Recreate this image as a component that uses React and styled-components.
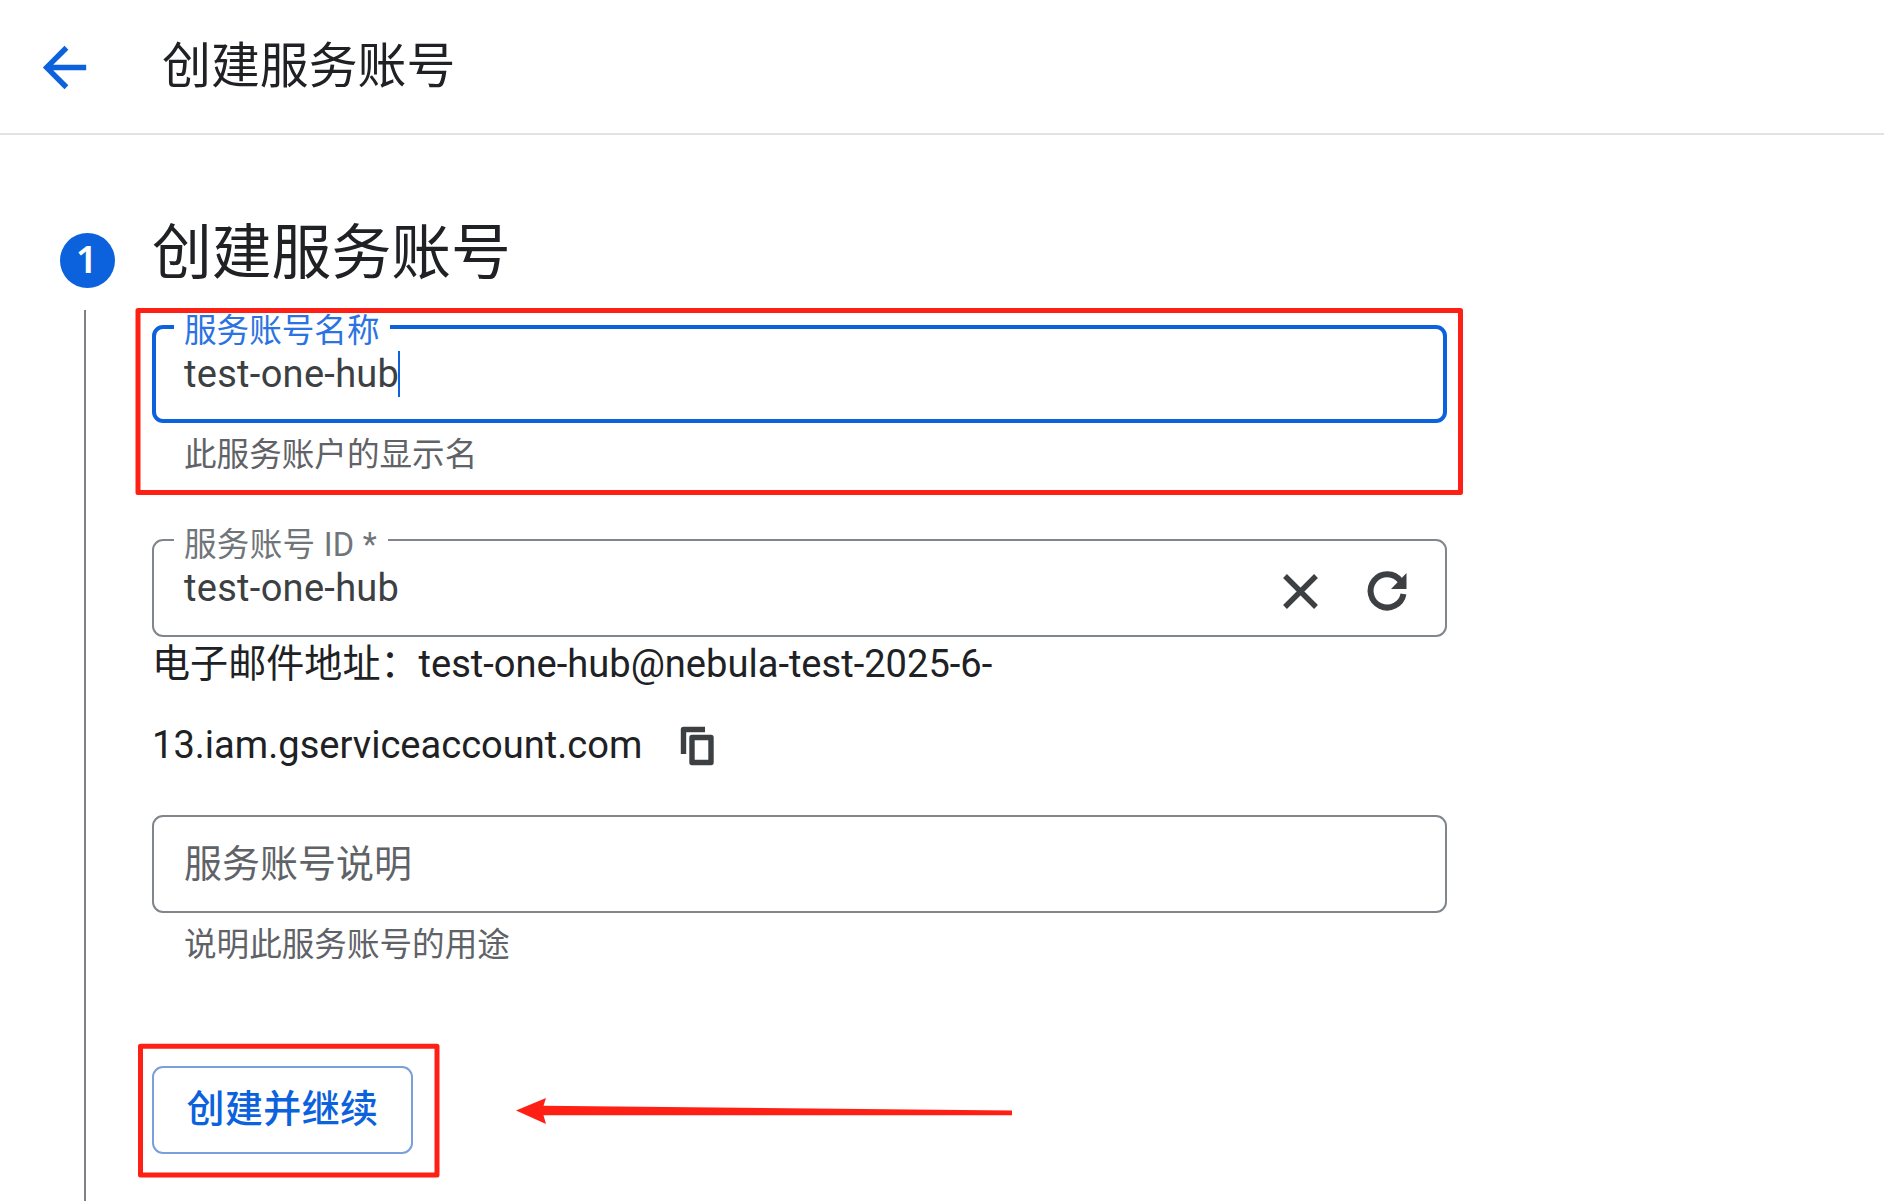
// src/App.jsx
import React, { useState } from 'react';
import styled, { createGlobalStyle } from 'styled-components';

const GlobalStyle = createGlobalStyle`
  * {
    box-sizing: border-box;
  }

  body {
    margin: 0;
    background: #fff;
    color: #202124;
    font-family: Roboto, "Noto Sans CJK SC", sans-serif;
    overflow: hidden;
  }
`;

const Page = styled.div`
  position: relative;
  display: flex;
  flex-direction: column;
  width: 1884px;
  height: 1201px;
  overflow: hidden;
  background: #fff;
`;

const Header = styled.header`
  display: flex;
  align-items: center;
  flex: none;
  height: 135px;
  padding-left: 32px;
  border-bottom: 2px solid #dfe3e3;
`;

const BackButton = styled.button`
  display: flex;
  padding: 0;
  margin-top: 2px;
  border: none;
  background: none;
  color: #0b62dc;
  cursor: pointer;
`;

const PageTitle = styled.h1`
  margin: 0 0 0 65px;
  font-size: 48.9px;
  font-weight: 400;
  line-height: 64px;
`;

const Stepper = styled.main`
  display: flex;
  flex: 1;
  min-height: 0;
  padding-left: 60px;
`;

const Rail = styled.div`
  display: flex;
  flex-direction: column;
  align-items: center;
  flex: none;
  width: 55px;
  margin-right: 37px;
  padding-top: 98px;
`;

const StepNumber = styled.div`
  flex: none;
  width: 55px;
  height: 55px;
  padding-right: 2px;
  border-radius: 50%;
  background: #0b62dc;
  color: #fff;
  font-family: "Noto Sans", sans-serif;
  font-size: 38px;
  font-weight: 600;
  line-height: 51px;
  text-align: center;
`;

const StepLine = styled.div`
  flex: 1;
  width: 2px;
  margin: 22px 5px 0 0;
  background: #808186;
`;

const StepContent = styled.section`
  width: 1295px;
  padding-top: 81px;
`;

const StepTitle = styled.h2`
  margin: 0;
  height: 109px;
  font-size: 59.8px;
  font-weight: 400;
  line-height: 76px;
`;

const Field = styled.div`
  position: relative;
  display: flex;
  align-items: center;
  justify-content: space-between;
  height: 98px;
  padding: 0 ${(p) => (p.$focused ? '28px' : '30px')};
  border: ${(p) => (p.$focused ? '4px solid #0b62dc' : '2px solid #80868b')};
  border-radius: 11px;
`;

const FloatingLabel = styled.label`
  position: absolute;
  top: ${(p) => (p.$focused ? '-18px' : '-16px')};
  left: ${(p) => (p.$focused ? '18px' : '20px')};
  padding: 0 11px 0 10px;
  background: #fff;
  color: ${(p) => (p.$focused ? '#2b73e2' : '#70757a')};
  font-size: 32.6px;
  line-height: 40px;
  letter-spacing: ${(p) => (p.$focused ? '0' : '0.25px')};
  white-space: pre;
`;

const Value = styled.span`
  display: flex;
  align-items: center;
  color: #3c4043;
  font-size: 38px;
  line-height: 46px;
  letter-spacing: 0.3px;
`;

const Caret = styled.span`
  width: 2px;
  height: 46px;
  margin-left: -1px;
  background: #0b62dc;
`;

const Placeholder = styled.span`
  color: #5f6368;
  font-size: 38px;
  line-height: 46px;
`;

const Hint = styled.p`
  margin: 0;
  padding-left: 32px;
  height: ${(p) => p.$height}px;
  padding-top: 10px;
  color: #5f6368;
  font-size: 32.6px;
  line-height: 44px;
`;

const FieldActions = styled.div`
  display: flex;
  gap: 38px;
  margin-top: 6px;
  margin-right: 3px;
`;

const IconButton = styled.button`
  display: flex;
  padding: 0;
  border: none;
  background: none;
  color: #3c4043;
  cursor: pointer;
`;

const Email = styled.div`
  display: flex;
  flex-direction: column;
  width: 900px;
  height: 178px;
  font-size: 38.1px;
  line-height: 81px;
`;

const EmailLine = styled.div`
  display: flex;
  align-items: center;
  gap: 31px;
  height: 81px;
  margin-top: ${(p) => (p.$first ? '-13px' : '0')};
`;

const SubmitButton = styled.button`
  display: block;
  width: 261px;
  height: 88px;
  padding: 0 0 9px;
  border: 2px solid #7b9fdc;
  border-radius: 11px;
  background: #fff;
  color: #0b62dc;
  font-family: inherit;
  font-size: 38px;
  font-weight: 500;
  letter-spacing: 0.4px;
  cursor: pointer;
`;

const Marks = styled.svg`
  position: absolute;
  top: 0;
  left: 0;
  pointer-events: none;
`;

const BackIcon = () => (
  <svg width="65" height="65" viewBox="0 0 24 24" fill="currentColor">
    <path d="M20 11H7.83l5.59-5.59L12 4l-8 8 8 8 1.41-1.41L7.83 13H20v-2z" />
  </svg>
);

const ClearIcon = () => (
  <svg width="49" height="49" viewBox="0 0 49 49" fill="none" stroke="currentColor" strokeWidth="5.4">
    <path d="M9 9L40 40M40 9L9 40" />
  </svg>
);

const RefreshIcon = () => (
  <svg width="49" height="49" viewBox="0 0 49 49">
    <path d="M37.5 14A16.6 16.6 0 1 0 40.5 27" fill="none" stroke="currentColor" strokeWidth="6" />
    <path d="M43.5 6V22H28z" fill="currentColor" />
  </svg>
);

const CopyIcon = () => (
  <svg width="49" height="49" viewBox="0 0 49 49" fill="none" stroke="currentColor" strokeLinejoin="round">
    <path d="M10.5 33V8.5H32" strokeWidth="5.4" />
    <rect x="19" y="16.5" width="19" height="25" strokeWidth="5.4" />
  </svg>
);

const Annotations = () => (
  <Marks width="1884" height="1201" viewBox="0 0 1884 1201">
    <g fill="none" stroke="#ff2015" strokeWidth="5" strokeLinejoin="round">
      <rect x="138" y="310.5" width="1322.5" height="182" />
      <rect x="140.5" y="1046.3" width="296.5" height="128.7" />
    </g>
    <path
      d="M516 1110.6L546 1098L543.5 1105.8L1012 1110.6V1115.2H543.5L546 1124z"
      fill="#ff2015"
    />
  </Marks>
);

const App = () => {
  const [accountId, setAccountId] = useState('test-one-hub');

  return (
    <Page>
      <GlobalStyle />
      <Header>
        <BackButton type="button">
          <BackIcon />
        </BackButton>
        <PageTitle>创建服务账号</PageTitle>
      </Header>
      <Stepper>
        <Rail>
          <StepNumber>1</StepNumber>
          <StepLine />
        </Rail>
        <StepContent>
          <StepTitle>创建服务账号</StepTitle>
          <Field $focused>
            <FloatingLabel $focused>服务账号名称</FloatingLabel>
            <Value>
              test-one-hub
              <Caret />
            </Value>
          </Field>
          <Hint $height={116}>此服务账户的显示名</Hint>
          <Field>
            <FloatingLabel>服务账号 ID *</FloatingLabel>
            <Value>{accountId}</Value>
            <FieldActions>
              <IconButton type="button" onClick={() => setAccountId('')}>
                <ClearIcon />
              </IconButton>
              <IconButton type="button" onClick={() => setAccountId('test-one-hub')}>
                <RefreshIcon />
              </IconButton>
            </FieldActions>
          </Field>
          <Email>
            <EmailLine $first>电子邮件地址：test-one-hub@nebula-test-2025-6-</EmailLine>
            <EmailLine>
              13.iam.gserviceaccount.com
              <IconButton type="button">
                <CopyIcon />
              </IconButton>
            </EmailLine>
          </Email>
          <Field>
            <Placeholder>服务账号说明</Placeholder>
          </Field>
          <Hint $height={153}>说明此服务账号的用途</Hint>
          <SubmitButton type="button">创建并继续</SubmitButton>
        </StepContent>
      </Stepper>
      <Annotations />
    </Page>
  );
};

export default App;
